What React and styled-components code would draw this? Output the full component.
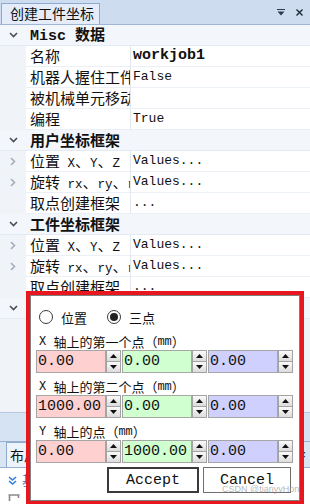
import styled, { createGlobalStyle } from "styled-components";

const GlobalStyle = createGlobalStyle`
  html, body {
    margin: 0;
    padding: 0;
  }
  body {
    width: 310px;
    height: 504px;
    overflow: hidden;
    background: #fff;
    color: #111;
    font-family: "Noto Sans CJK SC", "Noto Sans", sans-serif;
  }
`;

const Panel = styled.div`
  position: relative;
  width: 310px;
  height: 504px;
  display: flex;
  flex-direction: column;
  overflow: hidden;
  background: #f0f4f9;
`;

const TitleBar = styled.div`
  flex: none;
  height: 25px;
  box-sizing: border-box;
  display: flex;
  align-items: flex-end;
  padding: 0 7px 0 1px;
  background: #cddcef;
  border-bottom: 1px solid #9fb6d6;
`;

const TitleTab = styled.div`
  width: 99px;
  height: 21px;
  box-sizing: border-box;
  padding-left: 8px;
  background: #e3ecf8;
  border: 1px solid #8dabd1;
  border-bottom: none;
  font-size: 14px;
  line-height: 19px;
  white-space: nowrap;
`;

const TitleActions = styled.div`
  margin-left: auto;
  align-self: center;
  display: flex;
  align-items: center;
  gap: 11px;
`;

const Latin = styled.span`
  font-family: "Liberation Mono", monospace;
  font-size: ${(p) => p.$size || 12.5}px;
`;

function Mixed({ text, size }) {
  return text.split(/([\x20-\x7e]+)/).map((part, i) =>
    /[\x20-\x7e]/.test(part) ? (
      <Latin key={i} $size={size}>
        {part.replace(/ /g, "\u00a0")}
      </Latin>
    ) : (
      part
    )
  );
}

const Grid = styled.div`
  flex: 1;
  display: flex;
  flex-direction: column;
`;

const CategoryRow = styled.div`
  height: 21px;
  box-sizing: border-box;
  display: flex;
  align-items: center;
  background: #f3f7fc;
  border-bottom: 1px solid #e3eaf3;
`;

const CategoryLabel = styled.div`
  padding-left: 4px;
  font-size: 15px;
  font-weight: bold;
  line-height: 20px;
  white-space: nowrap;
`;

const Gutter = styled.div`
  width: 26px;
  flex: none;
  align-self: stretch;
  display: flex;
  align-items: center;
  justify-content: center;
`;

const ItemRow = styled.div`
  height: 21px;
  display: flex;
`;

const NameCell = styled.div`
  width: 105px;
  flex: none;
  box-sizing: border-box;
  padding-left: 4px;
  overflow: hidden;
  white-space: nowrap;
  background: #fff;
  border-right: 1px solid #e2e7ee;
  border-bottom: 1px solid #ebf0f6;
  font-size: 15px;
  line-height: 20px;
`;

const ValueCell = styled.div`
  flex: 1;
  box-sizing: border-box;
  padding-left: 2px;
  overflow: hidden;
  white-space: nowrap;
  background: #fff;
  border-bottom: 1px solid #ebf0f6;
  font-family: "Liberation Mono", monospace;
  font-size: ${(p) => (p.$bold ? 15 : 13)}px;
  font-weight: ${(p) => (p.$bold ? "bold" : "normal")};
  line-height: 20px;
`;

const Dock = styled.div`
  flex: none;
  height: 92px;
  display: flex;
  flex-direction: column;
`;

const DockBand = styled.div`
  height: 30px;
  box-sizing: border-box;
  background: #d6e3f2;
  border-top: 1px solid #b4c8e2;
  border-bottom: 1px solid #98b0d2;
`;

const DockTabs = styled.div`
  height: 26px;
  box-sizing: border-box;
  display: flex;
  align-items: flex-end;
  padding: 0 4px 0 6px;
  background: #d9e5f3;
  border-bottom: 1px solid #98b0d2;
`;

const DockTab = styled.div`
  height: 25px;
  box-sizing: border-box;
  padding: 0 6px 0 3px;
  background: #eef4fb;
  border: 1px solid #8dabd1;
  border-bottom: none;
  font-size: 14px;
  line-height: 24px;
  white-space: nowrap;
`;

const DockClose = styled.div`
  margin-left: auto;
  align-self: center;
  font-family: "Liberation Sans", sans-serif;
  font-size: 12px;
`;

const DockBody = styled.div`
  flex: 1;
  background: #fff;
  padding: 6px 0 0 8px;
  display: flex;
  flex-direction: column;
  gap: 8px;
`;

const DockLine = styled.div`
  display: flex;
  align-items: center;
  gap: 5px;
  color: #2a6fce;
  font-size: 13px;
  line-height: 12px;
  white-space: nowrap;
`;

const Popup = styled.div`
  position: absolute;
  left: 26px;
  top: 291px;
  width: 278px;
  height: 214px;
  box-sizing: border-box;
  border: 4px solid #e8161e;
  background: #fff;
`;

const Dialog = styled.div`
  height: 100%;
  box-sizing: border-box;
  border: 1px solid #7f7f7f;
  padding: 10px 0 0 5px;
  display: flex;
  flex-direction: column;
`;

const RadioRow = styled.div`
  height: 22px;
  display: flex;
  align-items: center;
  padding-left: 3px;
`;

const RadioOption = styled.label`
  display: flex;
  align-items: center;
  gap: 8px;
  margin-right: 20px;
  font-size: 13px;
`;

const RadioMark = styled.span`
  width: 14px;
  height: 14px;
  box-sizing: border-box;
  border-radius: 50%;
  border: 1px solid #3a3a3a;
  background: #fff;
  display: flex;
  align-items: center;
  justify-content: center;

  &::after {
    content: "";
    width: 8px;
    height: 8px;
    border-radius: 50%;
    background: #222;
    display: ${(p) => (p.$checked ? "block" : "none")};
  }
`;

const FieldLabel = styled.div`
  height: 22px;
  display: flex;
  align-items: flex-end;
  padding-left: 3px;
  font-size: 13px;
  line-height: 16px;
  white-space: nowrap;
`;

const FieldRow = styled.div`
  display: flex;
  gap: 1px;
`;

const FieldGroup = styled.div`
  display: flex;
`;

const NumberBox = styled.input`
  width: 70px;
  height: 23px;
  box-sizing: border-box;
  margin: 0;
  padding: 0 0 0 1px;
  border: 1px solid #a6a6a6;
  border-radius: 0;
  outline: none;
  background: ${(p) => p.$tint};
  color: #111;
  font-family: "Liberation Mono", monospace;
  font-size: 15px;
`;

const Spinner = styled.div`
  width: 15px;
  height: 23px;
  display: flex;
  flex-direction: column;
`;

const SpinButton = styled.div`
  flex: 1;
  box-sizing: border-box;
  display: flex;
  align-items: center;
  justify-content: center;
  border: 1px solid #a3a3a3;
  border-top-width: ${(p) => (p.$down ? 0 : 1)}px;
  background: linear-gradient(#fafafa, #dcdcdc);
`;

const ButtonRow = styled.div`
  display: flex;
  gap: 4px;
  margin-top: 4px;
  padding-left: 71px;
`;

const DialogButton = styled.button`
  width: ${(p) => (p.$primary ? 92 : 88)}px;
  height: 26px;
  box-sizing: border-box;
  margin: 0;
  padding: 0;
  background: #fff;
  border: ${(p) => (p.$primary ? "2px solid #3a3a3a" : "1px solid #6e6e6e")};
  border-radius: 0;
  color: #111;
  font-family: "Liberation Mono", monospace;
  font-size: 15px;
`;

const Watermark = styled.div`
  position: absolute;
  left: 222px;
  top: 484px;
  color: rgba(160, 160, 160, 0.75);
  font-family: "Liberation Sans", sans-serif;
  font-size: 9px;
  white-space: nowrap;
`;

const ChevronDown = () => (
  <svg width="9" height="6" viewBox="0 0 9 6">
    <path d="M1 1 L4.5 4.5 L8 1" fill="none" stroke="#4a4f57" strokeWidth="1.6" />
  </svg>
);

const ChevronRight = () => (
  <svg width="6" height="9" viewBox="0 0 6 9">
    <path d="M1 1 L4.5 4.5 L1 8" fill="none" stroke="#a4adb8" strokeWidth="1.6" />
  </svg>
);

const PinIcon = () => (
  <svg width="8" height="7" viewBox="0 0 8 7">
    <rect x="0" y="0" width="8" height="1" fill="#2c3a52" />
    <path d="M0.5 2.5 H7.5 L4 6.5 Z" fill="#2c3a52" />
  </svg>
);

const CloseIcon = () => (
  <svg width="7" height="7" viewBox="0 0 7 7">
    <path d="M0.5 0.5 L6.5 6.5 M6.5 0.5 L0.5 6.5" stroke="#1e2838" strokeWidth="1.4" />
  </svg>
);

const DoubleChevron = () => (
  <svg width="9" height="9" viewBox="0 0 9 9">
    <path d="M1 1 L4.5 4 L8 1 M1 5 L4.5 8 L8 5" fill="none" stroke="#2f7fe0" strokeWidth="1.6" />
  </svg>
);

const ToolIcon = () => (
  <svg width="12" height="8" viewBox="0 0 12 8">
    <path d="M0.5 1 H11.5 M1.5 1 V7 M10.5 1 V4" fill="none" stroke="#8a8a8a" strokeWidth="1.6" />
  </svg>
);

const Arrow = ({ up }) => (
  <svg width="7" height="4" viewBox="0 0 7 4">
    <path d={up ? "M0 4 H7 L3.5 0 Z" : "M0 0 H7 L3.5 4 Z"} fill="#111" />
  </svg>
);

const rows = [
  { category: "Misc 数据" },
  { name: "名称", value: "workjob1", bold: true },
  { name: "机器人握住工件", value: "False" },
  { name: "被机械单元移动", value: "" },
  { name: "编程", value: "True" },
  { category: "用户坐标框架" },
  { name: "位置 X、Y、Z", value: "Values...", nested: true },
  { name: "旋转 rx、ry、rz", value: "Values...", nested: true },
  { name: "取点创建框架", value: "..." },
  { category: "工件坐标框架" },
  { name: "位置 X、Y、Z", value: "Values...", nested: true },
  { name: "旋转 rx、ry、rz", value: "Values...", nested: true },
  { name: "取点创建框架", value: "..." },
  { category: "其他" },
];

const fields = [
  { label: "X 轴上的第一个点（mm）", values: ["0.00", "0.00", "0.00"] },
  { label: "X 轴上的第二个点（mm）", values: ["1000.00", "0.00", "0.00"] },
  { label: "Y 轴上的点（mm）", values: ["0.00", "1000.00", "0.00"] },
];

const tints = ["#ffd0d0", "#d0ffd0", "#d0d0ff"];

const App = () => {
  return (
    <Panel>
      <GlobalStyle />
      <TitleBar>
        <TitleTab>创建工件坐标</TitleTab>
        <TitleActions>
          <PinIcon />
          <CloseIcon />
        </TitleActions>
      </TitleBar>

      <Grid>
        {rows.map((row, i) =>
          row.category ? (
            <CategoryRow key={i}>
              <Gutter>
                <ChevronDown />
              </Gutter>
              <CategoryLabel>
                <Mixed text={row.category} size={15} />
              </CategoryLabel>
            </CategoryRow>
          ) : (
            <ItemRow key={i}>
              <Gutter>{row.nested && <ChevronRight />}</Gutter>
              <NameCell>
                <Mixed text={row.name} />
              </NameCell>
              <ValueCell $bold={row.bold}>{row.value}</ValueCell>
            </ItemRow>
          )
        )}
      </Grid>

      <Dock>
        <DockBand />
        <DockTabs>
          <DockTab>布局</DockTab>
          <DockClose>×</DockClose>
        </DockTabs>
        <DockBody>
          <DockLine>
            <DoubleChevron />
            基本
          </DockLine>
          <DockLine>
            <ToolIcon />
          </DockLine>
        </DockBody>
      </Dock>

      <Popup>
        <Dialog>
          <RadioRow>
            <RadioOption>
              <RadioMark />
              位置
            </RadioOption>
            <RadioOption>
              <RadioMark $checked />
              三点
            </RadioOption>
          </RadioRow>
          {fields.map((field) => (
            <div key={field.label}>
              <FieldLabel>
                <Mixed text={field.label} size={12} />
              </FieldLabel>
              <FieldRow>
                {field.values.map((v, j) => (
                  <FieldGroup key={j}>
                    <NumberBox $tint={tints[j]} defaultValue={v} />
                    <Spinner>
                      <SpinButton>
                        <Arrow up />
                      </SpinButton>
                      <SpinButton $down>
                        <Arrow />
                      </SpinButton>
                    </Spinner>
                  </FieldGroup>
                ))}
              </FieldRow>
            </div>
          ))}
          <ButtonRow>
            <DialogButton $primary>Accept</DialogButton>
            <DialogButton>Cancel</DialogButton>
          </ButtonRow>
        </Dialog>
      </Popup>
      <Watermark>CSDN @tianyvHon</Watermark>
    </Panel>
  );
};

export default App;
